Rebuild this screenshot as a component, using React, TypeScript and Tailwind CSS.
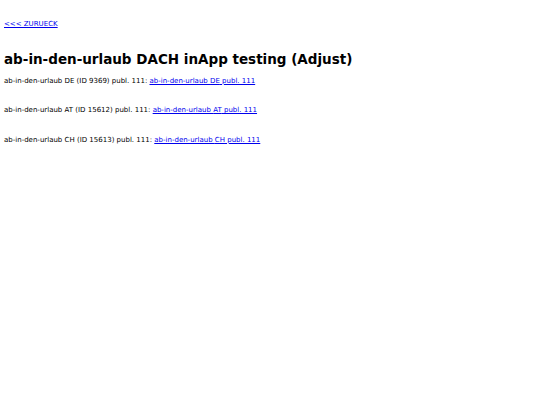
const rows = [
	{ name: "DE", id: 9369 },
	{ name: "AT", id: 15612 },
	{ name: "CH", id: 15613 },
];

export default function App() {
	return (
		<div className="min-h-[405px] bg-white px-[4px] pt-[19px] font-['DejaVu_Sans',Verdana,sans-serif] text-[7px] text-black">
			<a href="#" className="text-[#0000ee] underline">
				&lt;&lt;&lt; ZURUECK
			</a>
			<h1 className="mt-[21px] mb-[10px] text-[13.5px] font-bold leading-[16px]">
				ab-in-den-urlaub DACH inApp testing (Adjust)
			</h1>
			<div className="flex flex-col gap-[20.5px]">
				{rows.map((r) => (
					<p key={r.id} className="leading-[9px]">
						ab-in-den-urlaub {r.name} (ID {r.id}) publ. 111:{" "}
						<a href="#" className="text-[#0000ee] underline">
							ab-in-den-urlaub {r.name} publ. 111
						</a>
					</p>
				))}
			</div>
		</div>
	);
}
